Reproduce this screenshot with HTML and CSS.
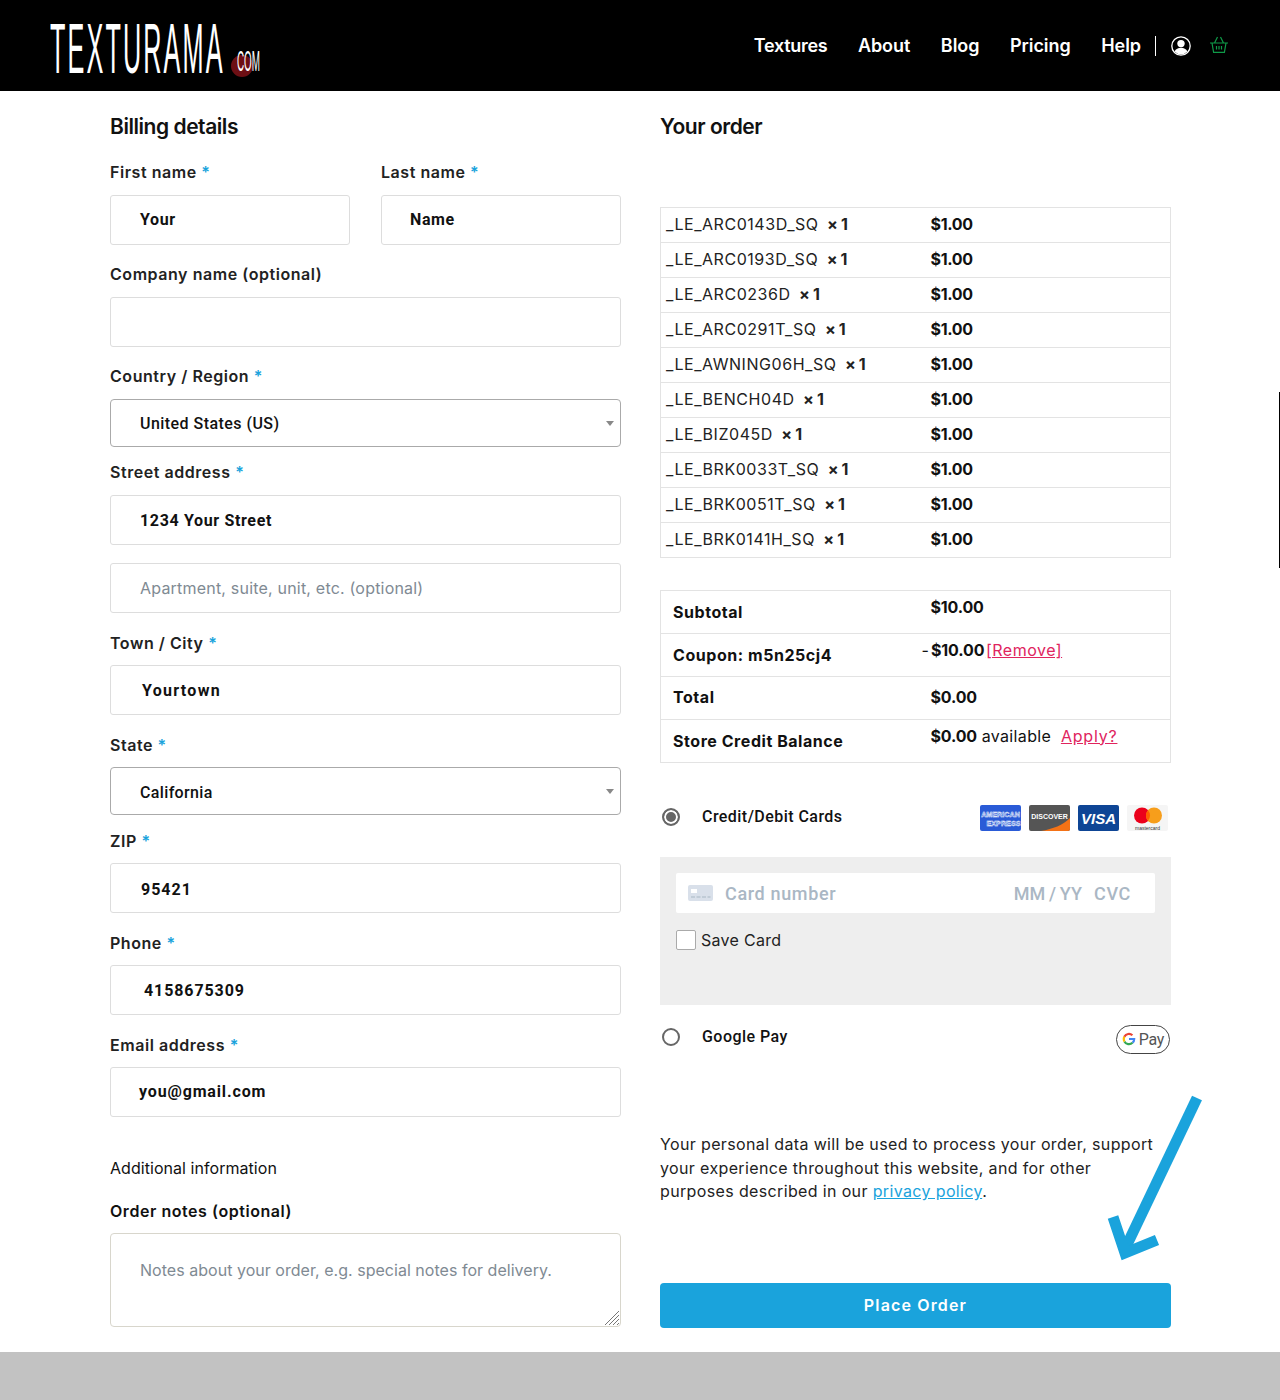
FILE: index.html
```html
<!DOCTYPE html>
<html lang="en">
<head>
<meta charset="utf-8">
<title>Checkout - Texturama</title>
<link rel="stylesheet" href="styles.css">
</head>
<body>
<header class="site-header">
  <a class="logo" href="#"><span class="logo-word">TEXTURAMA</span><span class="logo-com"><span class="logo-dot"></span><span class="logo-com-text">COM</span></span></a>
  <nav class="nav">
    <a class="nav-first" href="#">Textures</a>
    <a href="#">About</a>
    <a href="#">Blog</a>
    <a href="#">Pricing</a>
    <a class="nav-last" href="#">Help</a>
    <span class="nav-divider"></span>
    <svg class="icon-user" width="20" height="20" viewBox="0 0 20 20"><circle cx="10" cy="10" r="9.2" fill="#000" stroke="#fff" stroke-width="1.3"/><circle cx="10" cy="7.6" r="3.7" fill="#fff"/><path d="M3.6 15.6c1.2-2.8 3.6-3.9 6.4-3.9s5.2 1.100 6.400 3.900a8.600 8.600 0 0 1-12.800 0z" fill="#fff"/></svg>
    <svg class="icon-basket" width="20" height="18" viewBox="0 0 20 18" fill="none" stroke="#0f9a48" stroke-width="1.200"><path d="M1 7h18M3 7l1.600 9.300h10.800L17 7M5.500 7l3-6M14.500 7l-3-6"/><path d="M7.500 10v3.500M10 10v3.500M12.500 10v3.500"/></svg>
  </nav>
</header>

<main class="checkout">
  <section class="col">
    <h2 class="heading heading-billing">Billing details</h2>

    <div class="row-2">
      <div class="field"><label>First name <i>*</i></label><div class="input">Your</div></div>
      <div class="field"><label>Last name <i>*</i></label><div class="input in-name">Name</div></div>
    </div>
    <div class="field"><label>Company name (optional)</label><div class="input"></div></div>
    <div class="field field-select"><label>Country / Region <i>*</i></label><div class="select">United States (US)</div></div>
    <div class="field field-tight"><label>Street address <i>*</i></label><div class="input in-street">1234 Your Street</div></div>
    <div class="field"><div class="input placeholder">Apartment, suite, unit, etc. (optional)</div></div>
    <div class="field field-low"><label>Town / City <i>*</i></label><div class="input in-town">Yourtown</div></div>
    <div class="field field-low field-select"><label>State <i>*</i></label><div class="select select-state">California</div></div>
    <div class="field field-low"><label>ZIP <i>*</i></label><div class="input in-zip">95421</div></div>
    <div class="field field-low"><label>Phone <i>*</i></label><div class="input in-phone">4158675309</div></div>
    <div class="field field-low"><label>Email address <i>*</i></label><div class="input in-email">you@gmail.com</div></div>

    <h3 class="additional">Additional information</h3>
    <div class="field"><label class="notes-label">Order notes (optional)</label>
      <div class="textarea">Notes about your order, e.g. special notes for delivery.
        <svg class="resize" width="16" height="16" viewBox="0 0 16 16" stroke="#777" stroke-width="1"><path d="M15 1L1 15M15 5L5 15M15 9L9 15M15 13L13 15"/></svg>
      </div>
    </div>
  </section>

  <section class="col">
    <h2 class="heading heading-order">Your order</h2>
    <table class="items">
      <tr><td>_LE_ARC0143D_SQ <b>&nbsp;× 1</b></td><td class="price">$1.00</td></tr>
      <tr><td>_LE_ARC0193D_SQ <b>&nbsp;× 1</b></td><td class="price">$1.00</td></tr>
      <tr><td>_LE_ARC0236D <b>&nbsp;× 1</b></td><td class="price">$1.00</td></tr>
      <tr><td>_LE_ARC0291T_SQ <b>&nbsp;× 1</b></td><td class="price">$1.00</td></tr>
      <tr><td>_LE_AWNING06H_SQ <b>&nbsp;× 1</b></td><td class="price">$1.00</td></tr>
      <tr><td>_LE_BENCH04D <b>&nbsp;× 1</b></td><td class="price">$1.00</td></tr>
      <tr><td>_LE_BIZ045D <b>&nbsp;× 1</b></td><td class="price">$1.00</td></tr>
      <tr><td>_LE_BRK0033T_SQ <b>&nbsp;× 1</b></td><td class="price">$1.00</td></tr>
      <tr><td>_LE_BRK0051T_SQ <b>&nbsp;× 1</b></td><td class="price">$1.00</td></tr>
      <tr><td>_LE_BRK0141H_SQ <b>&nbsp;× 1</b></td><td class="price">$1.00</td></tr>
    </table>

    <table class="totals">
      <tr><th>Subtotal</th><td><b>$10.00</b></td></tr>
      <tr><th>Coupon: m5n25cj4</th><td><span class="minus">-</span><b>$10.00</b> <a class="link-red link-remove" href="#">[Remove]</a></td></tr>
      <tr class="row-total"><th>Total</th><td><b>$0.00</b></td></tr>
      <tr><th>Store Credit Balance</th><td><b>$0.00</b> <span class="avail">available</span> <a class="link-red link-apply" href="#">Apply?</a></td></tr>
    </table>

    <div class="pay-row pay-card">
      <span class="radio radio-on"></span>
      <span class="pay-name">Credit/Debit Cards</span>
      <span class="cards">
        <svg width="41" height="26" viewBox="0 0 41 26"><rect width="41" height="26" rx="2" fill="#2a5bd7"/><text class="amex" x="20.500" y="11.500" text-anchor="middle">AMERICAN</text><text class="amex" x="40.500" y="20.500" text-anchor="end">EXPRESS</text></svg>
        <svg width="41" height="26" viewBox="0 0 41 26"><rect width="41" height="26" rx="2" fill="#555"/><path d="M12 26C24 24 34 20 41 13V24a2 2 0 0 1-2 2z" fill="#f47216"/><text class="disc" x="20.500" y="13.500" text-anchor="middle">DISCOVER</text></svg>
        <svg width="41" height="26" viewBox="0 0 41 26"><rect width="41" height="26" rx="2" fill="#0e4595"/><text class="visa" x="20.500" y="19" text-anchor="middle">VISA</text></svg>
        <svg width="41" height="26" viewBox="0 0 41 26"><rect width="41" height="26" rx="2" fill="#f5f5f5"/><circle cx="15" cy="10.500" r="8" fill="#eb001b"/><circle cx="27" cy="10.500" r="8" fill="#f79e1b"/><path d="M21 5.200a8 8 0 0 1 0 10.600a8 8 0 0 1 0-10.600z" fill="#ff5f00"/><text class="mc" x="20.500" y="24.500" text-anchor="middle">mastercard</text></svg>
      </span>
    </div>

    <div class="card-panel">
      <div class="card-input">
        <svg class="card-glyph" width="25" height="16" viewBox="0 0 25 16"><rect width="25" height="16" rx="2" fill="#d9e0ea"/><rect x="3" y="4" width="6" height="4" fill="#fff"/><path d="M3 12h4M8.500 12h4M14 12h4M19.500 12h3" stroke="#aab7c4" stroke-width="1.200"/></svg>
        <span class="card-number">Card number</span>
        <span class="card-exp">MM / YY</span>
        <span class="card-cvc">CVC</span>
      </div>
      <div class="save-card"><span class="checkbox"></span>Save Card</div>
    </div>

    <div class="pay-row pay-google">
      <span class="radio"></span>
      <span class="pay-name">Google Pay</span>
      <span class="gpay">
        <svg width="14" height="14" viewBox="0 0 14 14" fill="none" stroke-width="2.200"><path d="M7 7h5.200a5.200 5.200 0 0 1-1.700 3.800" stroke="#4285f4"/><path d="M10.500 10.800A5.200 5.200 0 0 1 2.400 9.400" stroke="#34a853"/><path d="M2.400 9.400a5.200 5.200 0 0 1 0-4.800" stroke="#fbbc05"/><path d="M2.400 4.600a5.200 5.200 0 0 1 8-1.300" stroke="#ea4335"/></svg>
        <span>Pay</span>
      </span>
    </div>

    <p class="privacy">Your personal data will be used to process your order, support your experience throughout this website, and for other purposes described in our <a href="#">privacy policy</a>.</p>

    <button class="place-order" type="button">Place Order</button>
  </section>
</main>

<footer class="site-footer"></footer>

<svg class="arrow" width="110" height="180" viewBox="0 0 110 180" fill="none" stroke="#1aa3dc"><path d="M93 8L20 161" stroke-width="11"/><path d="M9 127L21 163L53 150" stroke-width="11"/></svg>
<span class="edge-line"></span>
</body>
</html>
```

FILE: styles.css
```css
* { box-sizing: border-box; }
html, body { margin: 0; padding: 0; }
body {
  position: relative;
  background: #fff;
  color: #111;
  font-family: Inter, "Open Sans", sans-serif;
  font-size: 16px;
  height: 1400px;
  overflow: hidden;
}
a { color: inherit; }

/* header */
.site-header {
  height: 91px;
  background: #000;
  display: flex;
  align-items: center;
  justify-content: space-between;
  padding: 0 51px 0 50px;
}
.logo {
  display: flex;
  align-items: flex-end;
  text-decoration: none;
  color: #fff;
  height: 52px;
  width: 212px;
}
.logo-word {
  display: block;
  align-self: flex-start;
  font-family: "Liberation Sans", sans-serif;
  font-size: 71px;
  line-height: 58px;
  letter-spacing: 6px;
  transform: scaleX(0.355);
  transform-origin: left center;
  width: 182px;
  white-space: nowrap;
}
.logo-com { position: relative; display: block; width: 30px; height: 30px; }
.logo-dot {
  position: absolute; left: -1px; bottom: -5px;
  width: 22px; height: 22px; border-radius: 50%;
  background: #6d0f14;
}
.logo-com-text {
  position: absolute; left: 5px; bottom: -4px;
  font-family: "Liberation Sans", sans-serif;
  font-size: 29px; line-height: 29px;
  transform: scaleX(0.34);
  transform-origin: left center;
}
.nav { display: flex; align-items: center; color: #fff; }
.nav a {
  color: #fff;
  text-decoration: none;
  font-size: 18px;
  font-weight: 600;
  letter-spacing: -0.05px;
  margin-right: 30.5px;
}
.nav .nav-first { letter-spacing: -0.3px; }
.nav .nav-last { margin-right: 14px; }
.nav-divider { width: 1px; height: 20px; background: #fff; margin-right: 15px; }
.icon-user { margin-right: 18px; display: block; }
.icon-basket { display: block; margin-bottom: 2px; }

/* layout */
.checkout {
  height: 1261px;
  padding: 21px 109px 0 110px;
  display: grid;
  grid-template-columns: 511px 511px;
  column-gap: 39px;
  align-items: start;
}
.col { display: flex; flex-direction: column; position: relative; }
.heading {
  margin: 0;
  font-size: 21px;
  line-height: 30px;
  font-weight: 600;
  letter-spacing: -0.45px;
  color: #111;
}
.heading-billing { margin-bottom: 19px; }
.heading-order { margin-bottom: 65px; }

/* form */
.row-2 { display: grid; grid-template-columns: 240px 240px; column-gap: 31px; }
.field { margin-bottom: 18px; }
.field-select { margin-bottom: 14px; }
.field label {
  display: block;
  height: 22px;
  line-height: 22px;
  margin-bottom: 12px;
  font-size: 16px;
  font-weight: 600;
  letter-spacing: 0.55px;
  color: #222;
}
.field-low label { margin-top: 1px; margin-bottom: 11px; }
.field label i { color: #1aa3dc; font-style: normal; }
.input {
  height: 50px;
  border: 1px solid #ddd;
  border-radius: 3px;
  padding-left: 29px;
  font-family: Roboto, sans-serif;
  font-weight: 700;
  font-size: 16px;
  line-height: 48px;
  letter-spacing: 0.6px;
  color: #111;
}
.in-name { padding-left: 28px; }
.in-street { line-height: 50px; letter-spacing: 0.65px; }
.in-town { padding-left: 31px; line-height: 50px; letter-spacing: 1.3px; }
.in-zip { padding-left: 30px; line-height: 52px; letter-spacing: 1px; }
.in-phone { padding-left: 33px; line-height: 50px; letter-spacing: 0.9px; }
.in-email { padding-left: 28px; letter-spacing: 0.85px; }
.placeholder, .textarea {
  font-family: Inter, sans-serif;
  font-weight: 400;
  font-size: 16px;
  color: #808a93;
}
.placeholder { line-height: 48px; letter-spacing: 0.2px; }
.select {
  position: relative;
  height: 48px;
  border: 1px solid #aaa;
  border-radius: 4px;
  padding-left: 29px;
  font-family: Roboto, sans-serif;
  font-weight: 500;
  font-size: 16px;
  line-height: 48px;
  letter-spacing: 0.45px;
  color: #111;
}
.select-state { line-height: 50px; letter-spacing: 0.35px; }
.select::after {
  content: "";
  position: absolute;
  right: 6px; top: 21px;
  border-left: 4px solid transparent;
  border-right: 4px solid transparent;
  border-top: 5px solid #888;
}
.additional {
  margin: 22px 0 0;
  font-size: 16px;
  font-weight: 400;
  line-height: 22px;
  letter-spacing: 0.05px;
  color: #111;
}
.additional + .field { margin-top: 0; }
.notes-label { margin-top: 21px; margin-bottom: 11px !important; color: #111 !important; }
.textarea {
  position: relative;
  height: 94px;
  border: 1px solid #d8d6cc;
  border-radius: 4px;
  padding: 25px 29px 0;
  line-height: 22px;
  letter-spacing: 0.03px;
}
.resize { position: absolute; right: 0; bottom: 0; }

/* order tables */
.items, .totals { width: 511px; border-collapse: collapse; table-layout: fixed; }
.items td {
  height: 35px;
  border: 1px solid #e3e3e3;
  padding: 0 0 2px 5px;
  font-size: 16px;
  letter-spacing: 0.55px;
  color: #222;
  white-space: nowrap;
}
.items tr td:first-child { width: 265px; border-right: 0; }
.items .price, .totals td b { font-weight: 700; color: #111; }
.items b { letter-spacing: -0.4px; }
.items .price { border-left: 0; padding-left: 5px; letter-spacing: -0.3px; }
.totals { margin-top: 32px; }
.totals th, .totals td {
  height: 43px;
  border-top: 1px solid #e3e3e3;
  border-bottom: 1px solid #e3e3e3;
  font-size: 16px;
  white-space: nowrap;
}
.totals th {
  width: 270px;
  text-align: left;
  font-weight: 700;
  color: #111;
  padding: 0 0 0 12px;
  border-left: 1px solid #e3e3e3;
  letter-spacing: 0.55px;
}
.totals td {
  padding: 0 0 11px 0;
  border-right: 1px solid #e3e3e3;
  letter-spacing: 0.15px;
}
.totals td b { letter-spacing: -0.15px; }
.row-total td { padding-bottom: 3px; }
.row-total th { padding-bottom: 2px; }
.minus { margin-left: -9px; margin-right: 2px; }
.avail { letter-spacing: 0.35px; }
.link-red { color: #e0245e; letter-spacing: 0.5px; }
.link-remove { margin-left: -3px; }
.link-apply { margin-left: 5px; letter-spacing: 0.8px; }

/* payment */
.pay-row { display: flex; align-items: center; position: relative; }
.pay-card { margin-top: 40px; height: 28px; margin-bottom: 26px; padding-left: 2px; }
.radio {
  width: 18px; height: 18px;
  border: 2px solid #666;
  border-radius: 50%;
  margin-right: 22px;
  flex: none;
  background: #fff;
}
.radio-on { background: #666; box-shadow: inset 0 0 0 2px #fff; }
.pay-name {
  font-family: Roboto, sans-serif;
  font-weight: 500;
  font-size: 16px;
  letter-spacing: 0.45px;
  color: #111;
  position: relative;
  top: -1px;
}
.cards { margin-left: auto; display: flex; gap: 8px; margin-right: 3px; position: relative; top: 1px; }
.cards svg { display: block; }
.amex { font: 700 7.200px "Liberation Sans", sans-serif; fill: #2a5bd7; stroke: #fff; stroke-width: 0.45px; }
.disc { font: 700 7px "Liberation Sans", sans-serif; fill: #fff; }
.visa { font: italic 700 15px "Liberation Sans", sans-serif; fill: #fff; }
.mc { font: 400 5px "Liberation Sans", sans-serif; fill: #333; }

.card-panel {
  height: 148px;
  background: #eee;
  padding: 16px;
}
.card-input {
  height: 40px;
  background: #fff;
  border-radius: 2px;
  display: flex;
  align-items: center;
  padding: 0 24px 0 12px;
  font-family: Roboto, sans-serif;
  font-weight: 500;
  font-size: 18px;
  letter-spacing: 0.65px;
  color: #aab7c4;
}
.card-glyph { margin-right: 12px; display: block; }
.card-exp { margin-left: auto; margin-right: 12px; letter-spacing: 0.1px; word-spacing: -1px; }
.save-card {
  display: flex;
  align-items: center;
  margin-top: 17px;
  font-size: 16px;
  letter-spacing: 0.3px;
  color: #222;
}
.checkbox {
  width: 20px; height: 20px;
  background: #fff;
  border: 1px solid #aaa;
  border-radius: 2px;
  margin-right: 5px;
}
.pay-google { margin-top: 18px; height: 28px; padding-left: 2px; }
.gpay {
  margin-left: auto;
  margin-right: 1px;
  width: 54px; height: 29px;
  border: 1px solid #444;
  border-radius: 15px;
  display: flex;
  align-items: center;
  justify-content: center;
  gap: 3px;
  font-family: Roboto, sans-serif;
  font-size: 16px;
  letter-spacing: -0.3px;
  color: #555;
  position: relative;
  top: 2px;
}
.gpay svg { display: block; }

.privacy {
  margin: 82px 0 0;
  max-width: 500px;
  font-size: 16px;
  line-height: 23.5px;
  letter-spacing: 0.36px;
  color: #222;
}
.privacy a { color: #1aa3dc; }
.place-order {
  display: block;
  width: 511px;
  height: 45px;
  margin-top: 79px;
  background: #1aa3dc;
  color: #fff;
  border: 0;
  border-radius: 4px;
  font-family: Inter, sans-serif;
  font-size: 16px;
  font-weight: 600;
  letter-spacing: 1.15px;
}

.site-footer { height: 48px; background: #c2c2c2; }

/* overlays */
.arrow { position: absolute; left: 1104px; top: 1090px; }
.edge-line { position: absolute; right: 0; top: 392px; width: 1px; height: 176px; background: #000; }
```
